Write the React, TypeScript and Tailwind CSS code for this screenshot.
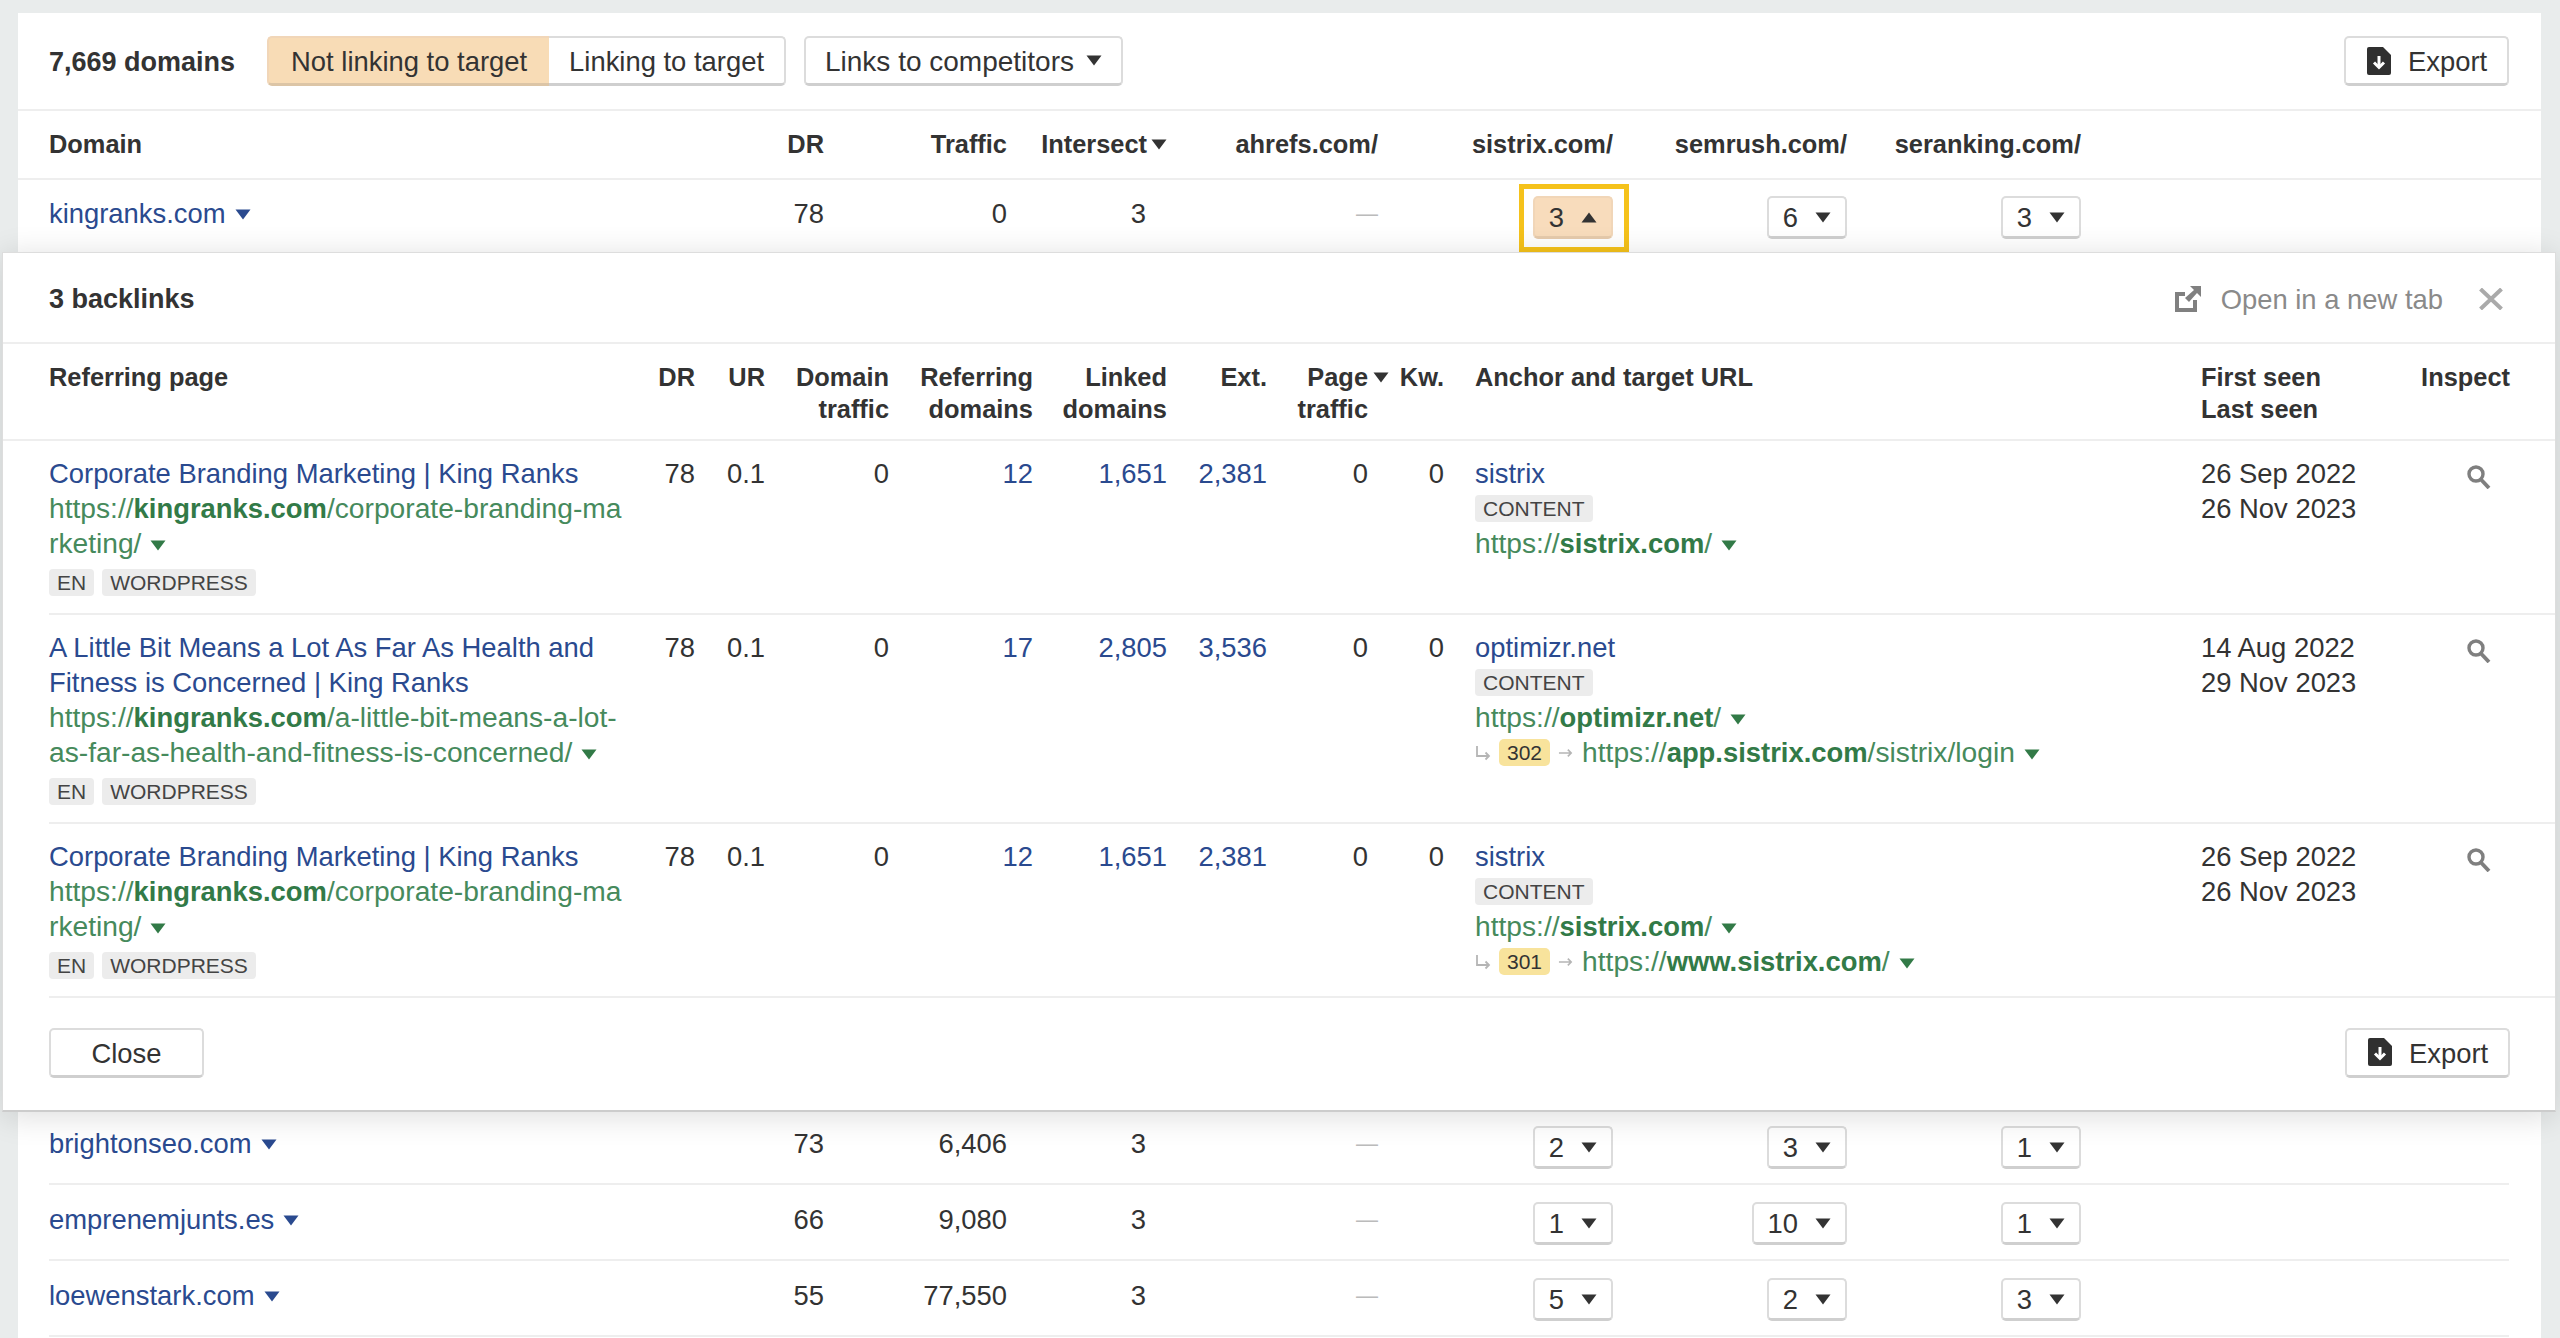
import type { ReactNode } from 'react';

const topCols = 'grid grid-cols-[700px_75px_183px_160px_211px_235px_234px_234px]';
const modalCols = 'grid grid-cols-[601px_45px_70px_124px_144px_134px_100px_101px_76px_757px_199px_110px]';

function Caret({ up, className }: { up?: boolean; className?: string }) {
  return (
    <svg viewBox="0 0 16 11" className={`inline-block w-[16px] h-[11px] shrink-0 fill-current ${className ?? ''}`}>
      <polygon points={up ? '8,0.5 15.5,10.5 0.5,10.5' : '0.5,0.5 15.5,0.5 8,10.5'} />
    </svg>
  );
}

function ExportIcon() {
  return (
    <svg viewBox="0 0 24 28" className="w-[24px] h-[28px]">
      <path d="M2 0H16L24 8V26a2 2 0 0 1-2 2H2a2 2 0 0 1-2-2V2a2 2 0 0 1 2-2Z" fill="#303030" />
      <path d="M12 9V19" stroke="#fff" strokeWidth="3" />
      <path d="M7 15.5L12 20.5L17 15.5" stroke="#fff" strokeWidth="3" fill="none" />
    </svg>
  );
}

function ExportButton() {
  return (
    <button className="flex items-center gap-[17px] w-[165px] h-[50px] pl-[21px] bg-white border-2 border-[#dcdcdc] border-b-[3px] border-b-[#cfcfcf] rounded-[5px]">
      <ExportIcon />
      <span className="pt-[2px]">Export</span>
    </button>
  );
}

function Pill({ n, open }: { n: number; open?: boolean }) {
  return (
    <span
      className={`flex items-center gap-[17px] h-[43px] pl-[14px] pr-[14px] border-2 border-b-[3px] rounded-[5px] ${
        open ? 'bg-[#f8dcbc] border-[#f1d6b8] border-b-[#e6cbac]' : 'bg-white border-[#dcdcdc] border-b-[#cfcfcf]'
      }`}
    >
      {n}
      <Caret up={open} className="text-[#333]" />
    </span>
  );
}

function Tag({ children }: { children: ReactNode }) {
  return <span className="flex items-center h-[27px] px-[8px] bg-[#ececec] rounded-[4px] text-[21px] text-[#444]">{children}</span>;
}

function Url({ pre, strong, rest }: { pre: string; strong: string; rest?: string }) {
  return (
    <span className="text-[#468a5c] text-[28.2px]">
      {pre}
      <b className="text-[#327a47] text-[27.4px]">{strong}</b>
      {rest}
    </span>
  );
}

function Redirect({ code, children }: { code: number; children: ReactNode }) {
  return (
    <div className="flex items-center h-[35px] whitespace-nowrap">
      <svg viewBox="0 0 16 16" className="w-[16px] h-[16px] fill-none stroke-[#b5b5b5] stroke-[1.8]">
        <path d="M2 1V11H14M10.5 7.5L14 11L10.5 14.5" />
      </svg>
      <span className="flex items-center ml-[8px] h-[27px] px-[8px] bg-[#f8e39c] rounded-[5px] text-[21px]">{code}</span>
      <svg viewBox="0 0 16 12" className="ml-[8px] mr-[9px] w-[15px] h-[12px] fill-none stroke-[#b5b5b5] stroke-[1.8]">
        <path d="M1 6H14M10.5 2.5L14 6L10.5 9.5" />
      </svg>
      <span>{children}</span>
    </div>
  );
}

function DomainRow({ name, dr, traffic, vals, first }: { name: string; dr: number; traffic: string; vals: number[]; first?: boolean }) {
  return (
    <div className={`ml-[31px] mr-[32px] ${first ? 'pt-[16px] pb-[13px]' : 'pt-[17px] pb-[14px] border-b-2 border-[#eeeeee]'} ${topCols}`}>
      <a className="flex items-center gap-[9px] h-[35px] text-[#2a4a8f]">
        {name}
        <Caret className="mt-[2px]" />
      </a>
      <span className="text-right">{dr}</span>
      <span className="text-right">{traffic}</span>
      <span className="text-right pr-[21px]">3</span>
      <span className="text-right text-[22px] text-[#bbbbbb]">—</span>
      {vals.map((v, i) => (
        <div key={i} className="flex justify-end">
          {first && i === 0 ? (
            <span className="relative">
              <Pill n={v} open />
              <span className="absolute -top-[12px] -bottom-[13px] -left-[14px] -right-[16px] border-[5px] border-[#f5c21b]" />
            </span>
          ) : (
            <Pill n={v} />
          )}
        </div>
      ))}
    </div>
  );
}

function SearchIcon() {
  return (
    <svg viewBox="0 0 24 24" className="w-[24px] h-[24px] fill-none stroke-[#7f7f7f]">
      <circle cx="9" cy="9" r="7" strokeWidth="3.4" />
      <path d="M14 14.5L22 23" strokeWidth="3.8" />
    </svg>
  );
}

type Backlink = {
  title: string[];
  url: ReactNode;
  ref: string;
  linked: string;
  ext: string;
  anchor: string;
  target: ReactNode;
  redirect?: ReactNode;
  first: string;
  last: string;
};

const backlinks: Backlink[] = [
  {
    title: ['Corporate Branding Marketing | King Ranks'],
    url: (
      <>
        <Url pre="https://" strong="kingranks.com" rest="/corporate-branding-ma" />
        <br />
        <Url pre="" strong="" rest="rketing/" />
      </>
    ),
    ref: '12',
    linked: '1,651',
    ext: '2,381',
    anchor: 'sistrix',
    target: <Url pre="https://" strong="sistrix.com" rest="/" />,
    first: '26 Sep 2022',
    last: '26 Nov 2023',
  },
  {
    title: ['A Little Bit Means a Lot As Far As Health and', 'Fitness is Concerned | King Ranks'],
    url: (
      <>
        <Url pre="https://" strong="kingranks.com" rest="/a-little-bit-means-a-lot-" />
        <br />
        <Url pre="" strong="" rest="as-far-as-health-and-fitness-is-concerned/" />
      </>
    ),
    ref: '17',
    linked: '2,805',
    ext: '3,536',
    anchor: 'optimizr.net',
    target: <Url pre="https://" strong="optimizr.net" rest="/" />,
    redirect: (
      <Redirect code={302}>
        <Url pre="https://" strong="app.sistrix.com" rest="/sistrix/login" />
        <Caret className="ml-[9px] text-[#327a47]" />
      </Redirect>
    ),
    first: '14 Aug 2022',
    last: '29 Nov 2023',
  },
  {
    title: ['Corporate Branding Marketing | King Ranks'],
    url: (
      <>
        <Url pre="https://" strong="kingranks.com" rest="/corporate-branding-ma" />
        <br />
        <Url pre="" strong="" rest="rketing/" />
      </>
    ),
    ref: '12',
    linked: '1,651',
    ext: '2,381',
    anchor: 'sistrix',
    target: <Url pre="https://" strong="sistrix.com" rest="/" />,
    redirect: (
      <Redirect code={301}>
        <Url pre="https://" strong="www.sistrix.com" rest="/" />
        <Caret className="ml-[9px] text-[#327a47]" />
      </Redirect>
    ),
    first: '26 Sep 2022',
    last: '26 Nov 2023',
  },
];

function BacklinkRow({ b }: { b: Backlink }) {
  return (
    <div className={`${modalCols} pt-[15px] pb-[17px] border-b-2 border-[#eeeeee]`}>
      <div className="whitespace-nowrap">
        <div className="text-[#2a4a8f]">
          {b.title.map((t) => (
            <div key={t}>{t}</div>
          ))}
        </div>
        <div>
          {b.url}
          <Caret className="ml-[9px] text-[#327a47]" />
        </div>
        <div className="flex gap-[8px] mt-[8px]">
          <Tag>EN</Tag>
          <Tag>WORDPRESS</Tag>
        </div>
      </div>
      <span className="text-right">78</span>
      <span className="text-right">0.1</span>
      <span className="text-right">0</span>
      <span className="text-right text-[#2a4a8f]">{b.ref}</span>
      <span className="text-right text-[#2a4a8f]">{b.linked}</span>
      <span className="text-right text-[#2a4a8f]">{b.ext}</span>
      <span className="text-right">0</span>
      <span className="text-right">0</span>
      <div className="pl-[31px]">
        <div className="text-[#2a4a8f]">{b.anchor}</div>
        <div className="flex items-center h-[35px]">
          <Tag>CONTENT</Tag>
        </div>
        <div>
          {b.target}
          <Caret className="ml-[9px] text-[#327a47]" />
        </div>
        {b.redirect}
      </div>
      <div>
        <div>{b.first}</div>
        <div>{b.last}</div>
      </div>
      <div className="flex justify-end pr-[19px] pt-[9px]">
        <SearchIcon />
      </div>
    </div>
  );
}

export default function App() {
  return (
    <div className="h-[1338px] overflow-hidden bg-[#e9ecec] pt-[13px] px-[18px] text-[27.4px] leading-[35px] text-[#333333] font-['Liberation_Sans',sans-serif]">
      <div className="bg-white h-full mr-[1px]">
        {/* toolbar */}
        <div className="flex items-center h-[98px] pl-[31px] pr-[32px] border-b-2 border-[#eeeeee]">
          <b className="mr-[32px] pt-[2px] text-[27px]">7,669 domains</b>
          <div className="flex h-[50px]">
            <button className="px-[22px] pt-[2px] bg-[#f8dcb6] border-2 border-r-0 border-[#f1d6b8] border-b-[3px] border-b-[#dcc5a6] rounded-l-[5px]">Not linking to target</button>
            <button className="px-[20px] pt-[2px] bg-white border-2 border-l-0 border-[#dcdcdc] border-b-[3px] border-b-[#cfcfcf] rounded-r-[5px]">Linking to target</button>
          </div>
          <button className="flex items-center gap-[12px] ml-[18px] h-[50px] pl-[19px] pr-[19px] bg-white border-2 border-[#dcdcdc] border-b-[3px] border-b-[#cfcfcf] rounded-[5px]">
            <span className="pt-[2px] text-[28px]">Links to competitors</span>
            <Caret />
          </button>
          <div className="ml-auto">
            <ExportButton />
          </div>
        </div>

        {/* table head */}
        <div className={`${topCols} items-center h-[69px] pl-[31px] border-b-2 border-[#eeeeee] font-bold text-[25.4px]`}>
          <span>Domain</span>
          <span className="text-right">DR</span>
          <span className="text-right">Traffic</span>
          <span className="flex items-center justify-end gap-[4px]">
            Intersect
            <Caret />
          </span>
          <span className="text-right">ahrefs.com/</span>
          <span className="text-right">sistrix.com/</span>
          <span className="text-right">semrush.com/</span>
          <span className="text-right">seranking.com/</span>
        </div>

        <DomainRow first name="kingranks.com" dr={78} traffic="0" vals={[3, 6, 3]} />

        {/* expanded row */}
        <div className="relative z-10 -ml-[16px] -mb-[3px] w-[2554px] bg-white border border-[#dddddd] border-b-2 border-b-[#cccccc] shadow-[0_4px_30px_rgba(0,0,0,0.14)]">
          <div className="flex items-center h-[91px] pt-[3px] pl-[46px] pr-[52px] border-b-2 border-[#eeeeee]">
            <b className="text-[27px]">3 backlinks</b>
            <span className="flex items-center ml-auto text-[#8a8a8a]">
              <svg viewBox="0 0 26 26" className="w-[26px] h-[26px] mr-[20px] fill-[#808080]">
                <path d="M0 6H10V10H4V22H18V14H22V26H0Z" />
                <path d="M15 0H26V11L22 7L14 16L10 12L19 4Z" />
              </svg>
              Open in a new tab
              <svg viewBox="0 0 24 22" className="ml-[36px] w-[24px] h-[22px] stroke-[#aaaaaa] stroke-[4]">
                <path d="M1.5 1L22.5 21M22.5 1L1.5 21" />
              </svg>
            </span>
          </div>

          <div className={`${modalCols} pl-[46px] pt-[17px] pb-[14px] leading-[32px] font-bold text-[25.4px] border-b-2 border-[#eeeeee]`}>
            <span>Referring page</span>
            <span className="text-right">DR</span>
            <span className="text-right">UR</span>
            <span className="text-right">
              Domain
              <br />
              traffic
            </span>
            <span className="text-right">
              Referring
              <br />
              domains
            </span>
            <span className="text-right">
              Linked
              <br />
              domains
            </span>
            <span className="text-right">Ext.</span>
            <span className="text-right">
              <span className="inline-flex items-center gap-[5px] -mr-[21px]">
                Page
                <Caret />
              </span>
              <br />
              traffic
            </span>
            <span className="text-right">Kw.</span>
            <span className="pl-[31px]">Anchor and target URL</span>
            <span>
              First seen
              <br />
              Last seen
            </span>
            <span className="text-right">Inspect</span>
          </div>

          <div className="pl-[46px]">
            {backlinks.map((b, i) => (
              <BacklinkRow key={i} b={b} />
            ))}
          </div>

          <div className="flex items-center justify-between h-[112px] pb-[3px] pl-[46px] pr-[45px]">
            <button className="w-[155px] h-[50px] pt-[2px] bg-white border-2 border-[#dcdcdc] border-b-[3px] border-b-[#cfcfcf] rounded-[5px]">Close</button>
            <ExportButton />
          </div>
        </div>

        <DomainRow name="brightonseo.com" dr={73} traffic="6,406" vals={[2, 3, 1]} />
        <DomainRow name="emprenemjunts.es" dr={66} traffic="9,080" vals={[1, 10, 1]} />
        <DomainRow name="loewenstark.com" dr={55} traffic="77,550" vals={[5, 2, 3]} />
      </div>
    </div>
  );
}
